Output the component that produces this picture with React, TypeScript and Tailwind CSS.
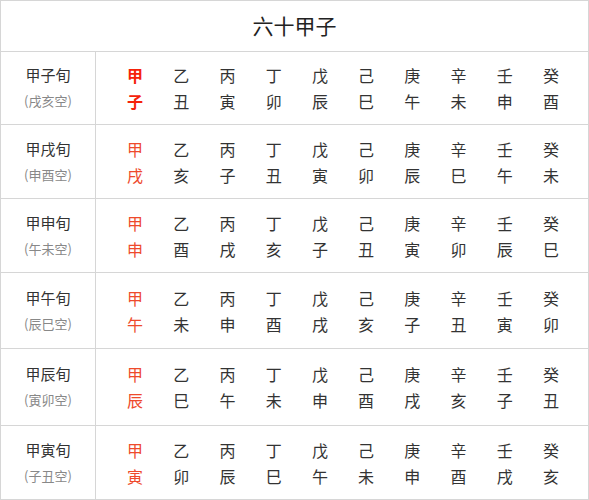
import React from "react";

const stems = ["甲", "乙", "丙", "丁", "戊", "己", "庚", "辛", "壬", "癸"];

const rows = [
  { name: "甲子旬", empty: "(戌亥空)", branches: ["子", "丑", "寅", "卯", "辰", "巳", "午", "未", "申", "酉"], h: "h-[73px] border-b", bold: true },
  { name: "甲戌旬", empty: "(申酉空)", branches: ["戌", "亥", "子", "丑", "寅", "卯", "辰", "巳", "午", "未"], h: "h-[74px] border-b", bold: false },
  { name: "甲申旬", empty: "(午未空)", branches: ["申", "酉", "戌", "亥", "子", "丑", "寅", "卯", "辰", "巳"], h: "h-[74px] border-b", bold: false },
  { name: "甲午旬", empty: "(辰巳空)", branches: ["午", "未", "申", "酉", "戌", "亥", "子", "丑", "寅", "卯"], h: "h-[76px] border-b", bold: false },
  { name: "甲辰旬", empty: "(寅卯空)", branches: ["辰", "巳", "午", "未", "申", "酉", "戌", "亥", "子", "丑"], h: "h-[77px] border-b", bold: false },
  { name: "甲寅旬", empty: "(子丑空)", branches: ["寅", "卯", "辰", "巳", "午", "未", "申", "酉", "戌", "亥"], h: "h-[73px]", bold: false },
];

export default function App() {
  return (
    <div
      className="w-[589px] h-[500px] bg-white border border-[#d6d6d6] text-[#333]"
      style={{ fontFamily: '"Noto Sans CJK SC", "Noto Sans", sans-serif' }}
    >
      {/* 标题 */}
      <div className="h-[51px] border-b border-[#d6d6d6] flex items-center justify-center text-[21px] text-[#222]">
        六十甲子
      </div>

      {rows.map((row) => (
        <div key={row.name} className={`flex border-[#d6d6d6] ${row.h}`}>
          <div className="w-[95px] border-r border-[#d6d6d6] flex flex-col items-center justify-center">
            <div className="text-[15px] leading-[26px] text-[#333]">{row.name}</div>
            <div className="text-[13px] leading-[26px] text-[#888]">{row.empty}</div>
          </div>
          <div className="flex-1 grid grid-cols-10 items-center pl-[16px] pr-[14px]">
            {stems.map((s, i) => (
              <div key={i} className="flex flex-col items-center text-[16px] leading-[26px]">
                <span
                  className={
                    i === 0
                      ? row.bold
                        ? "text-[#f5220a] font-bold"
                        : "text-[#ee4a2c]"
                      : "text-[#333]"
                  }
                >
                  {s}
                </span>
                <span
                  className={
                    i === 0
                      ? row.bold
                        ? "text-[#f5220a] font-bold"
                        : "text-[#ee4a2c]"
                      : "text-[#333]"
                  }
                >
                  {row.branches[i]}
                </span>
              </div>
            ))}
          </div>
        </div>
      ))}
    </div>
  );
}
